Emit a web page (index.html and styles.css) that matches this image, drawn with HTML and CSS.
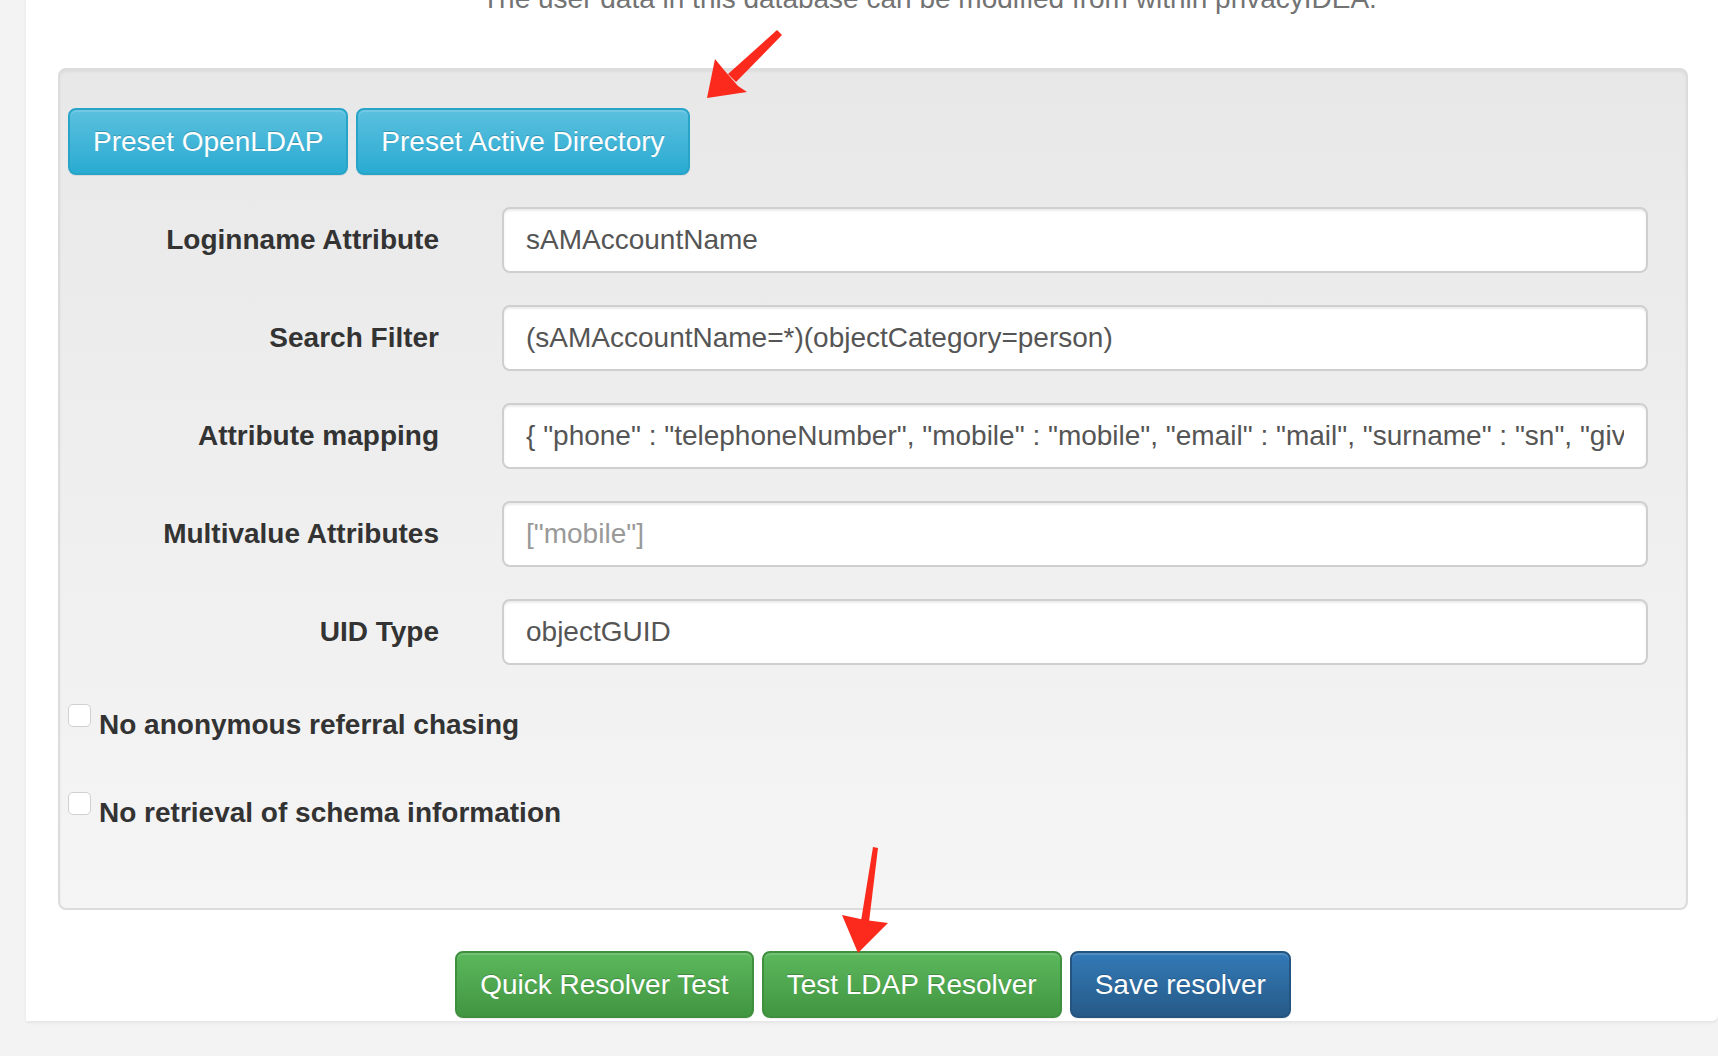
FILE: index.html
```html
<!DOCTYPE html>
<html>
<head>
<meta charset="utf-8">
<link rel="stylesheet" href="styles.css">
</head>
<body>
<div class="page">
  <div class="panel">
    <p class="intro">The user data in this database can be modified from within privacyIDEA.</p>
    <div class="well">
      <div class="presets">
        <button class="btn btn-info">Preset OpenLDAP</button>
        <button class="btn btn-info">Preset Active Directory</button>
      </div>
      <div class="form">
        <label class="label">Loginname Attribute</label>
        <input class="input" type="text" value="sAMAccountName">
        <label class="label">Search Filter</label>
        <input class="input" type="text" value="(sAMAccountName=*)(objectCategory=person)">
        <label class="label">Attribute mapping</label>
        <input class="input" type="text" value='{ "phone" : "telephoneNumber", "mobile" : "mobile", "email" : "mail", "surname" : "sn", "givenname" : "givenName" }'>
        <label class="label">Multivalue Attributes</label>
        <input class="input" type="text" placeholder='["mobile"]'>
        <label class="label">UID Type</label>
        <input class="input" type="text" value="objectGUID">
      </div>
      <div class="checks">
        <label class="check"><span class="box"></span><span>No anonymous referral chasing</span></label>
        <label class="check"><span class="box"></span><span>No retrieval of schema information</span></label>
      </div>
    </div>
    <div class="actions">
      <button class="btn btn-success">Quick Resolver Test</button>
      <button class="btn btn-success">Test LDAP Resolver</button>
      <button class="btn btn-primary">Save resolver</button>
    </div>
  </div>
</div>
<svg class="annot" width="1718" height="1056" viewBox="0 0 1718 1056">
  <polygon fill="#fb2a1d" points="777,30 782,35 736,82 728,74"/>
  <polygon fill="#fb2a1d" points="707,98 715,59 724,70 738,86 747,92"/>
  <polygon fill="#fb2a1d" points="873,847 878,848 869,922 861,921"/>
  <polygon fill="#fb2a1d" points="858,953 842,915 865,920 888,923"/>
</svg>
</body>
</html>
```
FILE: styles.css
```css
html, body {
  margin: 0;
  padding: 0;
}
body {
  background: #f3f3f3;
  font-family: "Liberation Sans", Arial, Helvetica, sans-serif;
  width: 1718px;
  height: 1056px;
  overflow: hidden;
  position: relative;
}
.page {
  padding-left: 26px;
}
.panel {
  background: #fff;
  margin-top: -20px;
  padding: 0 30px 3px 32px;
  border-bottom-right-radius: 6px;
  box-shadow: 0 2px 3px rgba(0, 0, 0, 0.06);
}
.intro {
  margin: 0;
  height: 38px;
  line-height: 38px;
  font-size: 28px;
  color: #737373;
  padding-left: 424px;
  white-space: nowrap;
}
.well {
  margin-top: 50px;
  background: linear-gradient(to bottom, #e8e8e8 0%, #f5f5f5 100%);
  border: 2px solid #dcdcdc;
  border-radius: 8px;
  box-shadow: inset 0 2px 3px rgba(0, 0, 0, 0.05), 0 1px 0 rgba(255, 255, 255, 0.2);
  padding: 38px 38px 76px 8px;
}
.presets {
  display: flex;
  gap: 8px;
}
.btn {
  font-family: "Liberation Sans", Arial, Helvetica, sans-serif;
  font-size: 28px;
  height: 67px;
  padding: 0 23px;
  border-radius: 8px;
  border: 2px solid;
  color: #fff;
  text-shadow: 0 -1px 0 rgba(0, 0, 0, 0.2);
  box-shadow: inset 0 2px 0 rgba(255, 255, 255, 0.15), 0 1px 1px rgba(0, 0, 0, 0.075);
  cursor: pointer;
}
.btn-info {
  background: linear-gradient(to bottom, #5bc0de 0%, #2aabd2 100%);
  border-color: #28a4c9;
}
.btn-success {
  background: linear-gradient(to bottom, #5cb85c 0%, #419641 100%);
  border-color: #3e8f3e;
}
.btn-primary {
  background: linear-gradient(to bottom, #337ab7 0%, #265a88 100%);
  border-color: #245580;
}
.form {
  margin-top: 32px;
  display: grid;
  grid-template-columns: 371px 1146px;
  column-gap: 63px;
  row-gap: 32px;
  align-items: center;
}
.label {
  text-align: right;
  font-weight: bold;
  font-size: 28px;
  color: #333;
}
.input {
  box-sizing: border-box;
  height: 66px;
  width: 100%;
  padding: 0 22px;
  font-family: "Liberation Sans", Arial, Helvetica, sans-serif;
  font-size: 28px;
  color: #555;
  background: #fff;
  border: 2px solid #cfcfcf;
  border-radius: 8px;
  box-shadow: inset 0 2px 2px rgba(0, 0, 0, 0.075);
  outline: none;
}
.input::placeholder {
  color: #999;
}
.checks {
  margin-top: 39px;
  display: flex;
  flex-direction: column;
  gap: 48px;
}
.check {
  display: flex;
  align-items: flex-start;
  gap: 8px;
  height: 40px;
  font-weight: bold;
  font-size: 28px;
  line-height: 42px;
  color: #333;
}
.box {
  box-sizing: border-box;
  width: 23px;
  height: 23px;
  background: #fff;
  border: 1.5px solid #d0d0d0;
  border-radius: 5px;
  flex: none;
}
.actions {
  margin-top: 41px;
  display: flex;
  justify-content: center;
  gap: 8px;
}
.annot {
  position: absolute;
  left: 0;
  top: 0;
  pointer-events: none;
}
```
